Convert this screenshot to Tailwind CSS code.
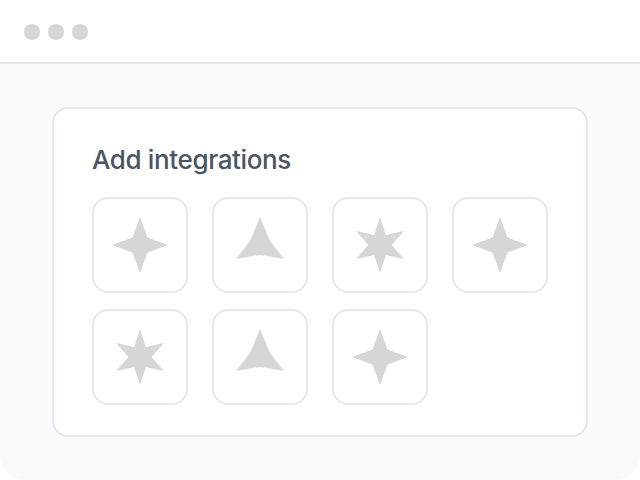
<!DOCTYPE html>
<html>
<head>
<meta charset="utf-8">
<script src="https://cdn.jsdelivr.net/npm/@tailwindcss/browser@4"></script>
</head>
<body class="bg-white">
<div class="w-[640px] h-[480px] overflow-hidden rounded-b-[24px] bg-[#f9fafb] font-['Inter',sans-serif]">
  <div class="h-[64px] bg-white border-b-2 border-[#e5e7eb] flex items-center gap-2 px-6 pt-[2px]">
    <div class="w-4 h-4 rounded-full bg-[#d6d6d6]"></div>
    <div class="w-4 h-4 rounded-full bg-[#d6d6d6]"></div>
    <div class="w-4 h-4 rounded-full bg-[#d6d6d6]"></div>
  </div>
  <div class="mt-[43px] mx-[52px] w-[536px] h-[330px] bg-white border-2 border-[#e5e7eb] rounded-2xl px-[38px] pt-[29px]">
    <h2 class="text-[26px] leading-[44px] h-[44px] tracking-[-0.37px] font-[450] text-[#4b5563]">Add integrations</h2>
    <div class="mt-[15px] grid grid-cols-[repeat(4,96px)] gap-x-6 gap-y-4">
      <div class="w-24 h-24 border-2 border-[#e5e7eb] rounded-2xl flex items-center justify-center">
        <svg width="56" height="56" viewBox="0 0 56 56" fill="#d6d6d6"><path d="M28 0L35.500 20.500L56 28L35.500 35.500L28 56L20.500 35.500L0 28L20.500 20.500Z"/></svg>
      </div>
      <div class="w-24 h-24 border-2 border-[#e5e7eb] rounded-2xl flex items-center justify-center">
        <svg width="56" height="56" viewBox="0 0 56 56" fill="#d6d6d6"><path d="M28 0L37.500 23L52 42L34 38.800Q28 37.800 22 38.800L4 42L18.500 23Z"/></svg>
      </div>
      <div class="w-24 h-24 border-2 border-[#e5e7eb] rounded-2xl flex items-center justify-center">
        <svg width="56" height="56" viewBox="0 0 56 56" fill="#d6d6d6"><path d="M28 0L33.800 18L52 14L39.500 28L52 42L33.800 38L28 56L22.200 38L4 42L16.500 28L4 14L22.200 18Z"/></svg>
      </div>
      <div class="w-24 h-24 border-2 border-[#e5e7eb] rounded-2xl flex items-center justify-center">
        <svg width="56" height="56" viewBox="0 0 56 56" fill="#d6d6d6"><path d="M28 0L35.500 20.500L56 28L35.500 35.500L28 56L20.500 35.500L0 28L20.500 20.500Z"/></svg>
      </div>
      <div class="w-24 h-24 border-2 border-[#e5e7eb] rounded-2xl flex items-center justify-center">
        <svg width="56" height="56" viewBox="0 0 56 56" fill="#d6d6d6"><path d="M28 0L33.800 18L52 14L39.500 28L52 42L33.800 38L28 56L22.200 38L4 42L16.500 28L4 14L22.200 18Z"/></svg>
      </div>
      <div class="w-24 h-24 border-2 border-[#e5e7eb] rounded-2xl flex items-center justify-center">
        <svg width="56" height="56" viewBox="0 0 56 56" fill="#d6d6d6"><path d="M28 0L37.500 23L52 42L34 38.800Q28 37.800 22 38.800L4 42L18.500 23Z"/></svg>
      </div>
      <div class="w-24 h-24 border-2 border-[#e5e7eb] rounded-2xl flex items-center justify-center">
        <svg width="56" height="56" viewBox="0 0 56 56" fill="#d6d6d6"><path d="M28 0L35.500 20.500L56 28L35.500 35.500L28 56L20.500 35.500L0 28L20.500 20.500Z"/></svg>
      </div>
    </div>
  </div>
</div>
</body>
</html>
